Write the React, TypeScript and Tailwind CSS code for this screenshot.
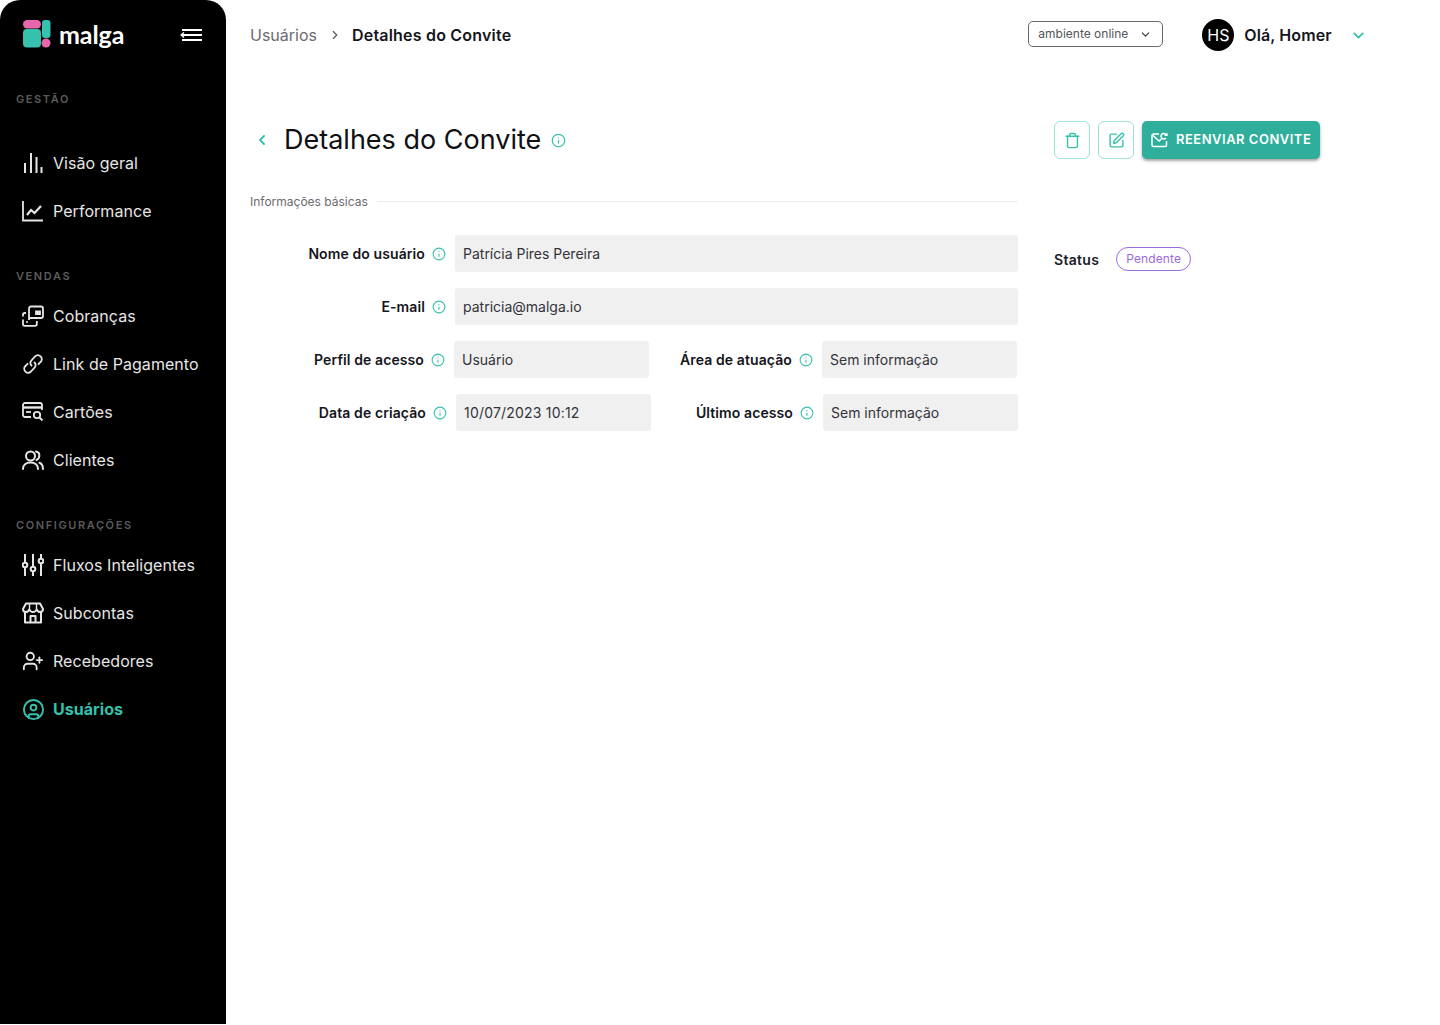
import React from "react";
import { ChevronDown, ChevronLeft, ChevronRight, CircleUser, Info, SquarePen, Trash, UserPlus } from "lucide-react";

const BarsIcon = () => (
  <svg width="22" height="24" viewBox="0 0 22 24" fill="none" stroke="currentColor" strokeWidth="2">
    <path d="M3 22V12M9 22V2M14.500 22V6M19.500 22V16" />
  </svg>
);

const ChartIcon = () => (
  <svg width="22" height="22" viewBox="0 0 22 22" fill="none" stroke="currentColor" strokeWidth="1.8">
    <path d="M1 1V20.500H21" />
    <path d="M5 15L9 10L12.500 13L19 6" strokeWidth="2.200" />
  </svg>
);

const ChargeIcon = () => (
  <svg width="22" height="22" viewBox="0 0 22 22" fill="none" stroke="currentColor" strokeWidth="1.8">
    <path d="M7 15V3.500C7 2.300 7.800 1.500 9 1.500H19C20.200 1.500 21 2.300 21 3.500V11C21 12.200 20.200 13 19 13H7" />
    <path d="M14 6.500H18V9H14Z" fill="currentColor" />
    <path d="M4 8H2.800C1.800 8 1 8.800 1 9.800V11.500M1 14.500V19C1 20 1.800 20.800 2.800 20.800H13C14 20.800 14.800 20 14.800 19V16" />
    <circle cx="5" cy="17" r="1" fill="currentColor" stroke="none" />
  </svg>
);

const ChainIcon = () => (
  <svg width="22" height="22" viewBox="0 0 22 22" fill="none" stroke="currentColor" strokeWidth="1.800" strokeLinecap="round">
    <path d="M9.500 12.500C8 11 8 8.800 9.500 7.300L13 3.500C14.600 1.900 17 1.900 18.600 3.400C20.200 5 20.200 7.400 18.600 9L16.500 11.200" />
    <path d="M12.500 9.500C14 11 14 13.200 12.500 14.700L9 18.500C7.400 20.100 5 20.100 3.400 18.600C1.800 17 1.800 14.600 3.400 13L5.500 10.800" />
  </svg>
);

const CardSearchIcon = () => (
  <svg width="22" height="20" viewBox="0 0 22 20" fill="none" stroke="currentColor" strokeWidth="1.800">
    <path d="M9 15H3C1.900 15 1 14.100 1 13V3C1 1.900 1.900 1 3 1H18C19.100 1 20 1.900 20 3V8" />
    <path d="M1 5.500H20" strokeWidth="2.400" />
    <path d="M4 10H9" />
    <circle cx="15" cy="13" r="3.200" />
    <path d="M17.500 15.500L20.500 18.500" />
  </svg>
);

const PeopleIcon = () => (
  <svg width="22" height="20" viewBox="0 0 22 20" fill="none" stroke="currentColor" strokeWidth="2" strokeLinecap="round">
    <circle cx="8.500" cy="6" r="4.500" />
    <path d="M1 19C1 15 4 12.500 8.500 12.500C13 12.500 16 15 16 19" />
    <path d="M14 1.600C16.400 2 17.500 4 17.300 6C17.100 7.800 16 9.400 14.500 10" />
    <path d="M17.500 12.800C19.700 13.700 21 16 21 19" />
  </svg>
);

const SlidersIcon = () => (
  <svg width="22" height="24" viewBox="0 0 22 24" fill="none" stroke="currentColor" strokeWidth="2">
    <path d="M3 1V9M3 15V23M11 1V13M11 19V23M19 1V5M19 11V23" />
    <circle cx="3" cy="12" r="2.300" />
    <circle cx="11" cy="16" r="2.300" />
    <circle cx="19" cy="8" r="2.300" />
  </svg>
);

const ShopIcon = () => (
  <svg width="22" height="22" viewBox="0 0 22 22" fill="none" stroke="currentColor" strokeWidth="2" strokeLinejoin="round">
    <path d="M4 1.500H18L21 7C21 9 19.500 10 18.200 10C16.800 10 15.300 9 14.600 7.500C14 9 12.500 10 11 10C9.500 10 8 9 7.400 7.500C6.700 9 5.200 10 3.800 10C2.500 10 1 9 1 7Z" />
    <path d="M7.500 2V7M14.500 2V7" strokeWidth="1.400" />
    <path d="M3 10V20.500H19V10" />
    <path d="M8.500 20.500V14H13.500V20.500" />
  </svg>
);

const ResendIcon = () => (
  <svg width="17" height="16" viewBox="0 0 17 16" fill="none" stroke="currentColor" strokeWidth="1.500">
    <path d="M8 2H2.500C1.600 2 1 2.600 1 3.500V13C1 14 1.600 14.500 2.500 14.500H14C15 14.500 15.500 14 15.500 13V9" />
    <path d="M1.500 3L8 9L10.500 7" />
    <path d="M15.500 3.500A2.800 2.800 0 1 0 15 6" />
    <path d="M13.500 3.500H16V1" strokeWidth="1.200" />
  </svg>
);

const Logo = () => (
  <svg width="28" height="28" viewBox="0 0 28 28">
    <rect x="0" y="0" width="18" height="8.500" rx="4.200" fill="#e667ab" />
    <rect x="0" y="9" width="18" height="18.500" rx="4" fill="#35c1ad" />
    <rect x="19" y="0" width="8.500" height="18" rx="3" fill="#35c1ad" />
    <circle cx="23" cy="23" r="4.500" fill="#e667ab" />
  </svg>
);

function NavItem({ icon, label, active }: { icon: React.ReactNode; label: string; active?: boolean }) {
  return (
    <div className={`flex h-12 items-center ${active ? "text-[#35c1ad] font-bold" : "text-[#e6e6e6]"}`}>
      <span className="flex w-[53px] shrink-0 justify-center pl-[13px]">{icon}</span>
      <span className="text-base tracking-[0.05px]">{label}</span>
    </div>
  );
}

function Field({ label, value, labelClass, inputClass }: { label: string; value: string; labelClass: string; inputClass: string }) {
  return (
    <>
      <span className={`shrink-0 text-right text-sm font-semibold tracking-[0.1px] text-[#15151c] ${labelClass}`}>{label}</span>
      <Info className="ml-[7px] h-[14px] w-[14px] shrink-0 text-[#35c1ad]" strokeWidth={1.9} />
      <div className={`ml-[9px] flex h-[37px] shrink-0 items-center rounded-[3px] bg-[#f0f0f0] px-2 text-sm text-[#33333a] ${inputClass}`}>
        {value}
      </div>
    </>
  );
}

export default function App() {
  return (
    <div className="flex min-h-[1025px] w-[1440px] bg-white font-['Inter',sans-serif]">
      <aside className="flex h-[1024px] w-[226px] shrink-0 flex-col rounded-t-[20px] bg-black">
        <div className="flex h-[70px] items-center pl-[23px] pr-[24px]">
          <div className="mb-[2px] flex items-center">
            <Logo />
            <span className="ml-2 font-['Lato',sans-serif] text-[25px] font-bold leading-none tracking-[-0.1px] text-white">malga</span>
          </div>
          <svg className="ml-auto" width="22" height="14" viewBox="0 0 22 14" fill="none" stroke="white" strokeWidth="1.800">
            <path d="M2 2H22M2 7H22M2 12H22" />
            <path d="M4 4.500L1 7L4 9.500" strokeWidth="1.400" />
          </svg>
        </div>

        <p className="mt-[21px] h-4 pl-4 text-[11px] font-semibold leading-4 tracking-[1.6px] text-[#5b5b5b]">GESTÃO</p>
        <nav className="mt-8">
          <NavItem icon={<BarsIcon />} label="Visão geral" />
          <NavItem icon={<ChartIcon />} label="Performance" />
        </nav>

        <p className="mt-[33px] h-4 pl-4 text-[11px] font-semibold leading-4 tracking-[1.6px] text-[#5b5b5b]">VENDAS</p>
        <nav className="mt-2">
          <NavItem icon={<ChargeIcon />} label="Cobranças" />
          <NavItem icon={<ChainIcon />} label="Link de Pagamento" />
          <NavItem icon={<CardSearchIcon />} label="Cartões" />
          <NavItem icon={<PeopleIcon />} label="Clientes" />
        </nav>

        <p className="mt-[33px] h-4 pl-4 text-[11px] font-semibold leading-4 tracking-[1.6px] text-[#5b5b5b]">CONFIGURAÇÕES</p>
        <nav className="mt-2">
          <NavItem icon={<SlidersIcon />} label="Fluxos Inteligentes" />
          <NavItem icon={<ShopIcon />} label="Subcontas" />
          <NavItem icon={<UserPlus className="h-[22px] w-[22px]" strokeWidth={2} />} label="Recebedores" />
          <NavItem icon={<CircleUser className="h-[23px] w-[23px]" strokeWidth={2} />} label="Usuários" active />
        </nav>
      </aside>

      <main className="flex-1 pl-6">
        <header className="flex h-[70px] items-center">
          <span className="text-base text-[#6b6b70]">Usuários</span>
          <ChevronRight className="ml-[11px] h-[14px] w-[14px] text-[#55555a]" />
          <span className="ml-[10px] text-base font-semibold tracking-[0.2px] text-[#15151c]">Detalhes do Convite</span>
          <div className="mb-[2px] ml-[517px] flex h-[26px] w-[135px] items-center justify-between rounded-[5px] border-[1.5px] border-[#6a6a6a] pl-[9px] pr-[10px] text-xs text-[#55555a]">
            ambiente online
            <ChevronDown className="h-[13px] w-[13px] text-[#333]" strokeWidth={2} />
          </div>
          <div className="ml-[39px] flex h-8 w-8 items-center justify-center rounded-full bg-black text-base text-white">HS</div>
          <span className="ml-[10px] text-base font-semibold tracking-[0.1px] text-[#15151c]">Olá, Homer</span>
          <ChevronDown className="ml-[18px] h-[17px] w-[17px] text-[#35c1ad]" strokeWidth={2.6} />
        </header>

        <div className="flex pt-[51px]">
          <section className="w-[768px] shrink-0">
            <div className="flex h-[38px] items-center">
              <ChevronLeft className="ml-[4px] h-[16px] w-[16px] text-[#35c1ad]" strokeWidth={2.8} />
              <h1 className="mb-[2px] ml-[14px] text-[27px] font-normal leading-none text-[#0f0f14]">Detalhes do Convite</h1>
              <Info className="ml-[10px] h-[15px] w-[15px] text-[#35c1ad]" strokeWidth={2} />
            </div>

            <div className="mt-[35px] flex h-4 items-center">
              <span className="text-xs text-[#6b6b70]">Informações básicas</span>
              <span className="mb-[2px] ml-[9px] h-px flex-1 bg-[#ececec]" />
            </div>

            <div className="mt-[25px] flex flex-col gap-4">
              <div className="flex items-center">
                <Field label="Nome do usuário" value="Patrícia Pires Pereira" labelClass="w-[175px]" inputClass="w-[563px]" />
              </div>
              <div className="flex items-center">
                <Field label="E-mail" value="patricia@malga.io" labelClass="w-[175px]" inputClass="w-[563px]" />
              </div>
              <div className="flex items-center">
                <Field label="Perfil de acesso" value="Usuário" labelClass="w-[174px]" inputClass="w-[195px]" />
                <Field label="Área de atuação" value="Sem informação" labelClass="w-[143px]" inputClass="w-[195px]" />
              </div>
              <div className="flex items-center">
                <Field label="Data de criação" value="10/07/2023 10:12" labelClass="w-[176px]" inputClass="w-[195px] tracking-[0.2px]" />
                <Field label="Último acesso" value="Sem informação" labelClass="w-[142px]" inputClass="w-[195px]" />
              </div>
            </div>
          </section>

          <section className="ml-9 w-[266px] shrink-0">
            <div className="flex h-[38px] gap-2">
              <button className="flex w-9 items-center justify-center rounded-[6px] border-[1.5px] border-[#9fe3d9] text-[#35c1ad]">
                <Trash className="h-[17px] w-[17px]" strokeWidth={2} />
              </button>
              <button className="flex w-9 items-center justify-center rounded-[6px] border-[1.5px] border-[#9fe3d9] text-[#35c1ad]">
                <SquarePen className="h-[17px] w-[17px]" strokeWidth={2} />
              </button>
              <button className="flex w-[178px] items-center gap-[8px] whitespace-nowrap rounded-[5px] bg-[#2fae9c] pl-[9px] text-[13px] font-semibold tracking-[0.5px] text-white shadow-[0_2px_3px_rgba(0,0,0,0.35)]">
                <ResendIcon />
                REENVIAR CONVITE
              </button>
            </div>
            <div className="mt-[88px] flex h-6 items-center">
              <span className="mt-[1px] text-sm font-semibold tracking-[0.3px] text-[#20202a]">Status</span>
              <span className="ml-[17px] flex h-6 w-[75px] items-center justify-center rounded-full border border-[#9a6bdc] text-xs tracking-[0.1px] text-[#9a6bdc]">Pendente</span>
            </div>
          </section>
        </div>
      </main>
    </div>
  );
}
